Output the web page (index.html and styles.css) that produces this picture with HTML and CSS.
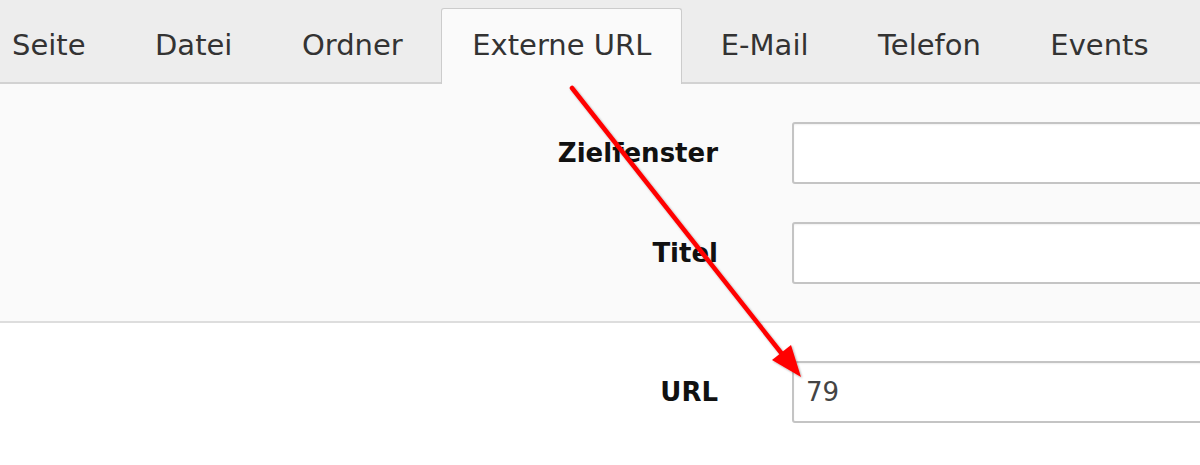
FILE: index.html
```html
<!DOCTYPE html>
<html lang="de">

<head>
    <meta charset="UTF-8">
    <meta name="viewport" content="width=device-width, initial-scale=1.0">
    <title>Link setzen</title>
    <link rel="stylesheet" href="styles.css">
</head>

<body>
    <div class="browser">
        <ul class="tabs">
            <li class="tab">Seite</li>
            <li class="tab">Datei</li>
            <li class="tab">Ordner</li>
            <li class="tab active">Externe URL</li>
            <li class="tab">E-Mail</li>
            <li class="tab">Telefon</li>
            <li class="tab">Events</li>
        </ul>

        <div class="attributes">
            <div class="form-row">
                <label for="target">Zielfenster</label>
                <input type="text" id="target">
            </div>
            <div class="form-row">
                <label for="title">Titel</label>
                <input type="text" id="title">
            </div>
        </div>

        <div class="link-form">
            <div class="form-row">
                <label for="url">URL</label>
                <input type="text" id="url" value="79">
            </div>
        </div>

        <!-- annotation arrow drawn over the screenshot -->
        <svg class="annotation" viewBox="0 0 1200 465" width="1200" height="465">
            <defs>
                <filter id="shadow" x="-10%" y="-10%" width="120%" height="120%">
                    <feDropShadow dx="1" dy="1" stdDeviation="1.2" flood-color="#000" flood-opacity="0.35" />
                </filter>
            </defs>
            <g filter="url(#shadow)">
                <line x1="572" y1="88" x2="786" y2="359" stroke="#ff0000" stroke-width="4.5" stroke-linecap="round" />
                <polygon points="801,377 772,360 791,345" fill="#ff0000" />
            </g>
        </svg>
    </div>
</body>

</html>
```

FILE: styles.css
```css
* {
    margin: 0;
    padding: 0;
    box-sizing: border-box;
}

body {
    font-family: 'DejaVu Sans', Verdana, sans-serif;
    background-color: #ffffff;
    color: #333333;
    overflow: hidden;
}

.browser {
    position: relative;
    width: 1200px;
    height: 465px;
    overflow: hidden;
}

.tabs {
    list-style: none;
    display: flex;
    gap: 7.5px;
    margin-left: -19px;
    padding-top: 8px;
    background-color: #ededed;
    border-bottom: 2px solid #d2d2d2;
    white-space: nowrap;
}

.tab {
    height: 74px;
    line-height: 72px;
    padding: 0 30px;
    font-size: 29px;
    color: #333333;
    border: 1px solid transparent;
    border-bottom: none;
    margin-bottom: -2px;
    border-radius: 3px 3px 0 0;
}

.tab.active {
    background-color: #fafafa;
    border-color: #cccccc;
    height: 76px;
}

.attributes {
    background-color: #fafafa;
    border-bottom: 2px solid #dddddd;
    padding: 38px 0 37px;
    display: flex;
    flex-direction: column;
    gap: 38px;
}

.link-form {
    padding: 38px 0;
}

.form-row {
    display: grid;
    grid-template-columns: 718px 1fr;
    column-gap: 74px;
    align-items: center;
}

.form-row label {
    text-align: right;
    font-size: 26px;
    font-weight: 700;
    color: #111111;
}

.form-row input {
    width: 500px;
    height: 62px;
    padding: 0 12px;
    font-family: 'DejaVu Sans', Verdana, sans-serif;
    font-size: 26px;
    color: #444444;
    background-color: #ffffff;
    border: 2px solid #c4c4c4;
    border-radius: 3px;
    box-shadow: inset 0 1px 2px rgba(0, 0, 0, 0.06);
    outline: none;
}

.annotation {
    position: absolute;
    top: 0;
    left: 0;
    pointer-events: none;
}
```
